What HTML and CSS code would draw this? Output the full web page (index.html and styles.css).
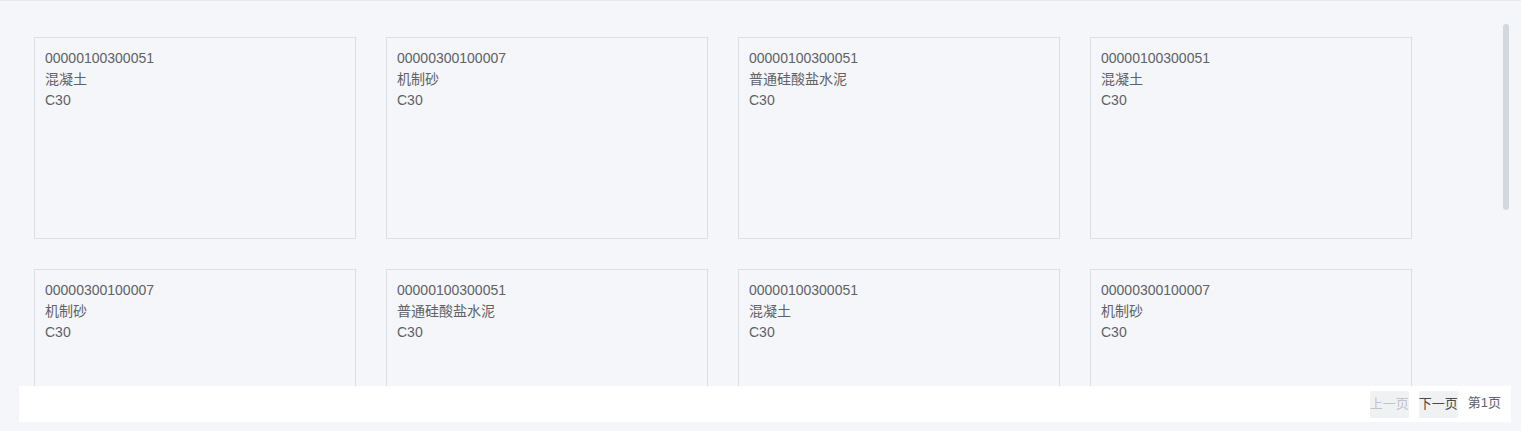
FILE: index.html
```html
<!DOCTYPE html>
<html lang="zh">
<head>
<meta charset="utf-8">
<link rel="stylesheet" href="styles.css">
</head>
<body>
<div class="page">
  <div class="scroll-area">
    <div class="grid">
      <div class="card"><div>00000100300051</div><div>混凝土</div><div>C30</div></div>
      <div class="card"><div>00000300100007</div><div>机制砂</div><div>C30</div></div>
      <div class="card"><div>00000100300051</div><div>普通硅酸盐水泥</div><div>C30</div></div>
      <div class="card"><div>00000100300051</div><div>混凝土</div><div>C30</div></div>
      <div class="card"><div>00000300100007</div><div>机制砂</div><div>C30</div></div>
      <div class="card"><div>00000100300051</div><div>普通硅酸盐水泥</div><div>C30</div></div>
      <div class="card"><div>00000100300051</div><div>混凝土</div><div>C30</div></div>
      <div class="card"><div>00000300100007</div><div>机制砂</div><div>C30</div></div>
    </div>
    <div class="thumb"></div>
  </div>
  <div class="pager">
    <span class="btn disabled">上一页</span>
    <span class="btn">下一页</span>
    <span class="current">第1页</span>
  </div>
</div>
</body>
</html>
```
FILE: styles.css
```css
html, body {
  margin: 0;
  padding: 0;
}
body {
  background: #f5f6fa;
  font-family: "Liberation Sans", Arial, "Noto Sans CJK SC", sans-serif;
  overflow: hidden;
}
.page {
  height: 431px;
  display: flex;
  flex-direction: column;
  border-top: 1px solid #e6e8eb;
  box-sizing: border-box;
}
.scroll-area {
  position: relative;
  height: 385px;
  overflow: hidden;
  flex: none;
}
.grid {
  display: grid;
  grid-template-columns: repeat(4, 322px);
  grid-auto-rows: 202px;
  column-gap: 30px;
  row-gap: 30px;
  padding: 36px 0 0 34px;
}
.card {
  border: 1px solid #dcdfe6;
  box-sizing: border-box;
  padding: 10px 10px;
  font-size: 14px;
  line-height: 21px;
  color: #606266;
}
.thumb {
  position: absolute;
  left: 1503px;
  top: 23px;
  width: 6px;
  height: 186px;
  border-radius: 3px;
  background: #d3d7de;
}
.pager {
  margin: 0 10px 0 19px;
  height: 36px;
  background: #ffffff;
  display: flex;
  align-items: center;
  justify-content: flex-end;
  gap: 10px;
  padding-right: 10px;
  font-family: "Noto Sans CJK SC", "Liberation Sans", sans-serif;
  font-size: 13px;
}
.btn {
  height: 27px;
  line-height: 23px;
  padding-bottom: 4px;
  box-sizing: border-box;
  background: #eff1f3;
  color: #4a4a4a;
  border-radius: 2px;
}
.btn.disabled {
  color: #c0c4cc;
}
.current {
  height: 27px;
  line-height: 23px;
  padding-bottom: 4px;
  box-sizing: border-box;
  color: #606266;
  font-family: "Liberation Sans", "Noto Sans CJK SC", sans-serif;
}
```
